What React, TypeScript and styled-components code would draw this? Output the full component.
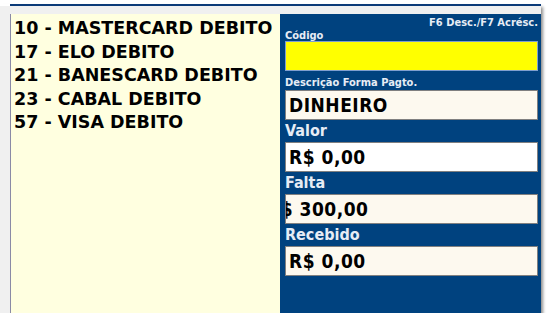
import React from "react";
import styled, { createGlobalStyle } from "styled-components";

const GlobalStyle = createGlobalStyle`
  html, body {
    margin: 0;
    padding: 0;
    background: #ffffff;
  }
  body {
    font-family: "DejaVu Sans Condensed", "DejaVu Sans", Verdana, sans-serif;
  }
`;

const Frame = styled.div`
  width: 541px;
  margin-top: 4px;
  box-shadow: 2px 3px 3px rgba(0, 0, 0, 0.45);
`;

const TopBar = styled.div`
  height: 2px;
  margin-left: 10px;
  background: #0b3a78;
`;

const Body = styled.div`
  background: #f0f0f0;
  padding: 8px 0 0 10px;
`;

const Content = styled.div`
  display: flex;
  height: 299px;
`;

const ListPanel = styled.ul`
  width: 270px;
  margin: 0;
  padding: 3px 0 0 3px;
  list-style: none;
  background: #ffffe0;
  border-left: 1px solid #8a8aa6;
  box-sizing: border-box;
`;

const ListItem = styled.li`
  font-family: "DejaVu Sans", Verdana, sans-serif;
  font-size: 17.5px;
  font-weight: bold;
  line-height: 23.5px;
  color: #000000;
  white-space: nowrap;
`;

const FormPanel = styled.div`
  flex: 1;
  background: #00427f;
  padding: 3px 3px 0 5px;
  display: flex;
  flex-direction: column;
`;

const Hint = styled.div`
  align-self: flex-end;
  font-size: 11px;
  font-weight: bold;
  color: #e6ecf5;
  line-height: 12px;
`;

const Label = styled.div<{ $big?: boolean }>`
  font-size: ${(p) => (p.$big ? "16px" : "11px")};
  font-weight: bold;
  color: #e6ecf5;
  height: ${(p) => (p.$big ? "22px" : "19px")};
  line-height: ${(p) => (p.$big ? "22px" : "23px")};
  white-space: nowrap;
`;

const CodeLabel = styled(Label)`
  height: 12px;
  line-height: 14px;
`;

const Field = styled.div<{ $bg: string; $border: string }>`
  height: 30px;
  flex: none;
  box-sizing: border-box;
  background: ${(p) => p.$bg};
  border: 1px solid ${(p) => p.$border};
  overflow: hidden;
  display: flex;
  align-items: center;
  padding: 0 0 1px 3px;
  font-size: 19px;
  font-weight: bold;
  letter-spacing: 0.5px;
  color: #000000;
  white-space: nowrap;
`;

const Scrolled = styled.span`
  margin-left: -22px;
`;

const items = [
  "10 - MASTERCARD DEBITO",
  "17 - ELO DEBITO",
  "21 - BANESCARD DEBITO",
  "23 - CABAL DEBITO",
  "57 - VISA DEBITO",
];

export default function App() {
  return (
    <>
      <GlobalStyle />
      <Frame>
        <TopBar />
        <Body>
          <Content>
            <ListPanel>
              {items.map((it) => (
                <ListItem key={it}>{it}</ListItem>
              ))}
            </ListPanel>
            <FormPanel>
              <Hint>F6 Desc./F7 Acrésc.</Hint>
              <CodeLabel>Código</CodeLabel>
              <Field $bg="#ffff00" $border="#7f9fd0" />
              <Label>Descrição Forma Pagto.</Label>
              <Field $bg="#fdf9ef" $border="#808080">
                DINHEIRO
              </Field>
              <Label $big>Valor</Label>
              <Field $bg="#ffffff" $border="#808080">
                R$ 0,00
              </Field>
              <Label $big>Falta</Label>
              <Field $bg="#fdf9ef" $border="#808080">
                <Scrolled>R$ 300,00</Scrolled>
              </Field>
              <Label $big>Recebido</Label>
              <Field $bg="#fdf9ef" $border="#808080">
                R$ 0,00
              </Field>
            </FormPanel>
          </Content>
        </Body>
      </Frame>
    </>
  );
}
